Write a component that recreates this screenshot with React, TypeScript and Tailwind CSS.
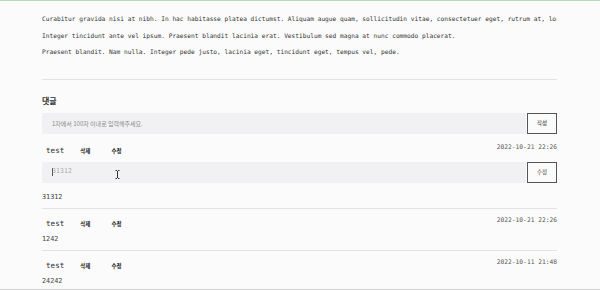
const paragraphs = [
  'Curabitur gravida nisi at nibh. In hac habitasse platea dictumst. Aliquam augue quam, sollicitudin vitae, consectetuer eget, rutrum at, lorem. Integer tincidunt ante vel ipsum.',
  'Integer tincidunt ante vel ipsum. Praesent blandit lacinia erat. Vestibulum sed magna at nunc commodo placerat.',
  'Praesent blandit. Nam nulla. Integer pede justo, lacinia eget, tincidunt eget, tempus vel, pede.',
];

const comments = [
  { id: 1, author: 'test', date: '2022-10-21 22:26', body: '31312', editing: true },
  { id: 2, author: 'test', date: '2022-10-21 22:26', body: '1242', editing: false },
  { id: 3, author: 'test', date: '2022-10-11 21:48', body: '24242', editing: false },
];

const mono = "font-['DejaVu_Sans_Mono',monospace]";
const kr = "font-['Noto_Sans_CJK_KR','Noto_Sans',sans-serif]";

function IBeam() {
  return (
    <svg className="absolute left-[73px] top-[8px]" width="5" height="9" viewBox="0 0 5 9">
      <path d="M0.5 0.5h1.5M3 0.5h1.5M2.5 1v7M0.5 8.5h1.5M3 8.5h1.5" stroke="#333" strokeWidth="1" fill="none" />
    </svg>
  );
}

function CommentItem({ c, first }: { c: (typeof comments)[number]; first: boolean }) {
  return (
    <div className={`border-b border-[#e3e3e3] pb-[6px] ${first ? 'pt-[9px]' : 'pt-[7px]'}`}>
      <div className="flex items-start justify-between">
        <div className="flex items-center pt-[3px]">
          <span className={`${mono} ml-[4px] text-[7.6px] leading-[10px] text-[#333]`}>{c.author}</span>
          <button className={`${kr} ml-[16px] text-[5.5px] font-bold leading-[10px] text-[#222]`}>삭제</button>
          <button className={`${kr} ml-[21px] text-[5.5px] font-bold leading-[10px] text-[#222]`}>수정</button>
        </div>
        <span className={`${mono} text-[6.25px] leading-[8px] text-[#555]`}>{c.date}</span>
      </div>
      {c.editing && (
        <div className="mt-[6px] flex h-[21px]">
          <div className="relative flex flex-1 items-center bg-[#f1f1f3] pl-[10px]">
            <span className="h-[8px] w-px bg-[#555]" />
            <span className={`${mono} -ml-px text-[6.6px] text-[#aaa]`}>{c.body}</span>
            <IBeam />
          </div>
          <button className={`${kr} ml-px w-[30px] border border-[#555] bg-[#fbfbfb] text-[5.5px] text-[#333]`}>수정</button>
        </div>
      )}
      <p className={`${mono} ${c.editing ? 'mt-[9px]' : 'mt-[5px]'} text-[6.8px] leading-[10px] text-[#444]`}>{c.body}</p>
    </div>
  );
}

export default function App() {
  return (
    <div className="h-[290px] w-[600px] overflow-hidden border-t border-b border-t-[#b6d9b8] border-b-[#cfcfcf] bg-[#fbfbfb]">
      <div className="ml-[42px] w-[515px]">
        <div className={`${mono} pt-[10px] text-[6.2px] leading-[16.5px] text-[#333]`}>
          {paragraphs.map((p, i) => (
            <p key={i} className="overflow-hidden whitespace-nowrap">{p}</p>
          ))}
        </div>
        <div className="mt-[18px] h-px bg-[#e3e3e3]" />
        <h3 className={`${kr} mt-[15px] text-[8px] font-semibold leading-[12px] text-[#333]`}>댓글</h3>
        <div className="mt-[6px] flex h-[21px]">
          <div className={`${kr} flex flex-1 items-center bg-[#f1f1f3] pl-[10px] text-[6px] text-[#8a8a8a]`}>
            1자에서 100자 이내로 입력해주세요.
          </div>
          <button className={`${kr} ml-px w-[30px] border border-[#555] bg-[#fbfbfb] text-[5.5px] text-[#333]`}>작성</button>
        </div>
        {comments.map((c, i) => (
          <CommentItem key={c.id} c={c} first={i === 0} />
        ))}
      </div>
    </div>
  );
}
